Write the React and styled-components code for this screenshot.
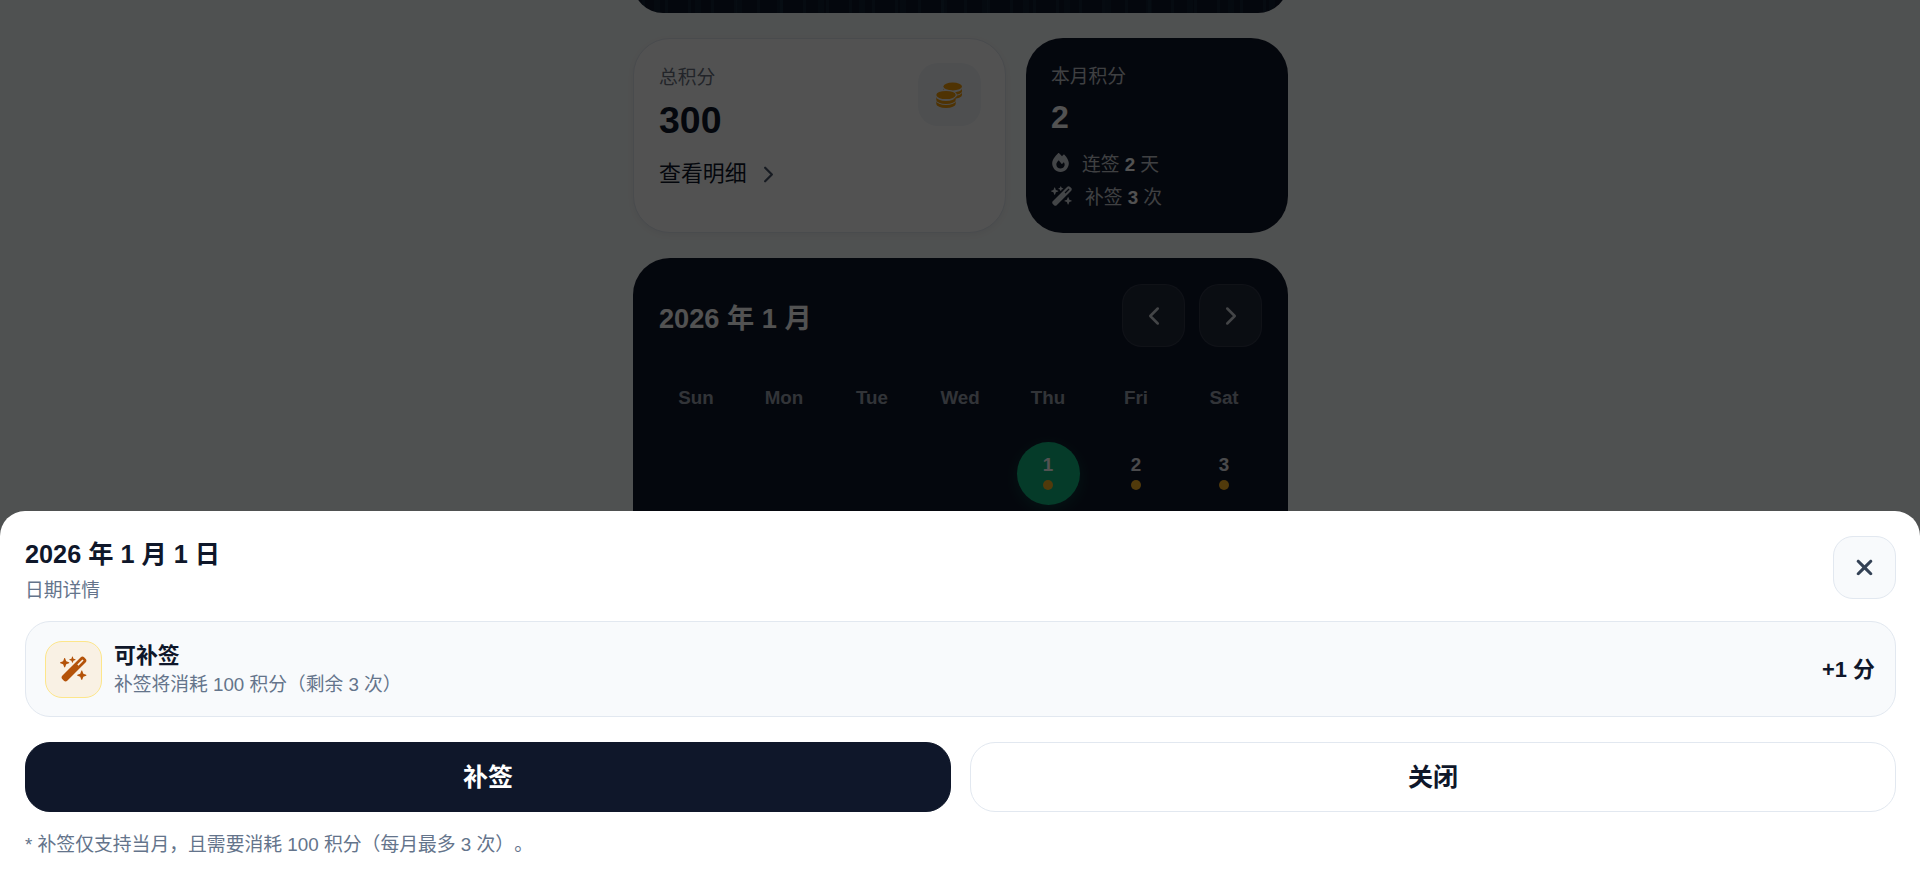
import React from "react";
import styled, { createGlobalStyle } from "styled-components";
import { FaFire, FaWandMagicSparkles, FaXmark } from "react-icons/fa6";
import { ChevronLeft, ChevronRight } from "lucide-react";

const Global = createGlobalStyle`
  html, body { margin: 0; padding: 0; height: 100%; overflow: hidden; background: #f6fafa; }
  body {
    font-family: "Liberation Sans", "Noto Sans CJK SC", sans-serif;
    color: #0f172a;
    text-spacing-trim: space-all;
  }
  button { font-family: inherit; }
  * { box-sizing: border-box; }
`;

const Page = styled.main`
  width: 655px;
  margin: -300px 0 0 633px;
  display: flex;
  flex-direction: column;
`;
const Hero = styled.div`
  height: 313px;
  border-radius: 0 0 30px 30px;
  background:
    repeating-linear-gradient(90deg, rgba(45, 110, 120, 0) 0 9px, rgba(45, 110, 120, 0.14) 9px 12px, rgba(45, 110, 120, 0) 12px 23px),
    repeating-linear-gradient(90deg, rgba(45, 110, 120, 0) 0 21px, rgba(45, 110, 120, 0.1) 21px 27px, rgba(45, 110, 120, 0) 27px 41px),
    #0f172a;
`;
const Stats = styled.section`
  margin-top: 25px;
  display: grid;
  grid-template-columns: 373px 262px;
  gap: 20px;
`;
const TotalCard = styled.div`
  position: relative;
  height: 195px;
  padding: 26px 25px 25px;
  background: #fff;
  border: 1px solid #e2e8f0;
  border-radius: 37px;
  box-shadow: 0 2px 6px rgba(15, 23, 42, 0.05);
`;
const Label = styled.div`
  font-size: 18.75px;
  line-height: 26px;
  color: ${(p) => (p.$dark ? "#c4c8ce" : "#6b7280")};
`;
const TotalValue = styled.div`
  margin-top: 6px;
  font-size: 37.5px;
  line-height: 46px;
  font-weight: 700;
`;
const DetailLink = styled.div`
  margin-top: 15px;
  display: flex;
  align-items: center;
  gap: 8px;
  font-size: 21.9px;
  line-height: 32px;
  color: #0f172a;
  svg { color: #475569; }
`;
const CoinBox = styled.div`
  position: absolute;
  top: 24px;
  right: 24px;
  width: 63px;
  height: 63px;
  display: flex;
  align-items: center;
  justify-content: center;
  border-radius: 20px;
  background: #f1f5f9;
`;
const MonthCard = styled.div`
  height: 195px;
  padding: 26px 25px 25px;
  border-radius: 37px;
  background: #0f172a;
  color: #fff;
`;
const MonthValue = styled.div`
  margin-top: 8px;
  font-size: 32px;
  line-height: 38px;
  font-weight: 700;
`;
const MonthLine = styled.div`
  display: flex;
  align-items: center;
  gap: ${(p) => p.$gap}px;
  height: 33px;
  font-size: 18.75px;
  color: #c4c8ce;
  b { color: #fff; }
  svg { flex: none; font-size: ${(p) => p.$icon}px; color: #d1d5db; }
`;
const MonthLines = styled.div`
  margin-top: 10px;
`;
const Calendar = styled.section`
  margin-top: 25px;
  height: 340px;
  padding: 26px 26px 0;
  border-radius: 37px;
  background: #0f172a;
  color: #fff;
`;
const CalHeader = styled.div`
  display: flex;
  align-items: center;
  justify-content: space-between;
`;
const CalTitle = styled.h2`
  margin: 0;
  font-size: 27.2px;
  font-weight: 700;
`;
const CalNav = styled.div`
  display: flex;
  gap: 14px;
`;
const NavButton = styled.button`
  width: 63px;
  height: 63px;
  display: flex;
  align-items: center;
  justify-content: center;
  border-radius: 20px;
  border: 1px solid rgba(255, 255, 255, 0.08);
  background: rgba(255, 255, 255, 0.08);
  color: #d1d5db;
`;
const Grid = styled.div`
  display: grid;
  grid-template-columns: repeat(7, 74px);
  column-gap: 14px;
`;
const WeekRow = styled(Grid)`
  margin-top: 38px;
`;
const WeekDay = styled.div`
  text-align: center;
  font-size: 18.75px;
  line-height: 26px;
  font-weight: 700;
  color: #9ca3af;
`;
const DayRow = styled(Grid)`
  margin-top: 31px;
`;
const DayCell = styled.div`
  justify-self: center;
  width: 63px;
  height: 63px;
  display: flex;
  flex-direction: column;
  align-items: center;
  padding-top: 12px;
  border-radius: 50%;
  font-size: 18.75px;
  line-height: 22px;
  font-weight: 700;
  color: ${(p) => (p.$active ? "#fff" : "#e5e7eb")};
  background: ${(p) => (p.$active ? "#10b981" : "transparent")};
  box-shadow: ${(p) => (p.$active ? "0 4px 14px rgba(16,185,129,.25)" : "none")};
`;
const Dot = styled.span`
  width: 10px;
  height: 10px;
  margin-top: 4px;
  border-radius: 50%;
  background: #fbb324;
`;
const Scrim = styled.div`
  position: fixed;
  inset: 0;
  background: rgba(0, 0, 0, 0.68);
`;
const Sheet = styled.aside`
  position: fixed;
  left: 0;
  right: 0;
  bottom: 0;
  height: 369px;
  padding: 25px 24px 0 25px;
  background: #fff;
  border-radius: 25px 25px 0 0;
`;
const SheetHeader = styled.div`
  display: flex;
  justify-content: space-between;
  align-items: flex-start;
  height: 85px;
`;
const SheetTitle = styled.h3`
  margin: 2px 0 0;
  font-size: 25.25px;
  line-height: 32px;
  font-weight: 700;
`;
const SheetSub = styled.div`
  margin-top: 7px;
  font-size: 18.75px;
  line-height: 28px;
  color: #64748b;
`;
const CloseButton = styled.button`
  width: 63px;
  height: 63px;
  display: flex;
  align-items: center;
  justify-content: center;
  border-radius: 20px;
  border: 1px solid #e2e8f0;
  background: #f8fafc;
  color: #334155;
  font-size: 25px;
`;
const InfoCard = styled.div`
  height: 96px;
  padding: 0 20px 0 19px;
  display: flex;
  align-items: center;
  gap: 12px;
  background: #f8fafc;
  border: 1px solid #e2e8f0;
  border-radius: 25px;
`;
const WandBox = styled.div`
  width: 57px;
  height: 57px;
  display: flex;
  align-items: center;
  justify-content: center;
  border-radius: 17px;
  background: #f9f1e4;
  border: 1px solid #fde68a;
  color: #b45309;
  font-size: 28px;
`;
const InfoText = styled.div`
  flex: 1;
  padding-top: 2px;
`;
const InfoTitle = styled.div`
  font-size: 21.9px;
  line-height: 28px;
  font-weight: 700;
`;
const InfoSub = styled.div`
  margin-top: 2px;
  font-size: 18.75px;
  line-height: 26px;
  color: #64748b;
`;
const Gain = styled.div`
  margin-bottom: 3px;
  font-size: 21.9px;
  font-weight: 700;
`;
const Actions = styled.div`
  margin-top: 25px;
  display: grid;
  grid-template-columns: 1fr 1fr;
  gap: 19px;
`;
const ActionButton = styled.button`
  height: 70px;
  padding-bottom: 5px;
  border-radius: 25px;
  font-size: 25px;
  font-weight: 700;
  color: ${(p) => (p.$primary ? "#fff" : "#0f172a")};
  background: ${(p) => (p.$primary ? "#0f172a" : "#fff")};
  border: 1px solid ${(p) => (p.$primary ? "#0f172a" : "#e2e8f0")};
`;
const Note = styled.p`
  margin: 19px 0 0;
  font-size: 18.82px;
  line-height: 28px;
  color: #64748b;
`;

const WEEK = ["Sun", "Mon", "Tue", "Wed", "Thu", "Fri", "Sat"];

const band = (cx, edge, rx, ry, h) =>
  `M${cx - rx} ${edge}A${rx} ${ry} 0 0 0 ${cx + rx} ${edge}V${edge + h}A${rx} ${ry} 0 0 1 ${cx - rx} ${edge + h}Z`;

function CoinStacks() {
  return (
    <svg width="30" height="30" viewBox="0 0 30 30" fill="#f59e0b" aria-hidden="true">
      <ellipse cx="17.7" cy="6.5" rx="9.3" ry="3.9" />
      <path d={band(17.7, 8.6, 9.3, 3.8, 2.6)} />
      <path d={band(17.7, 12.2, 9.3, 3.8, 2.8)} />
      <ellipse cx="11" cy="15" rx="11" ry="5.2" fill="#f1f5f9" />
      <ellipse cx="11" cy="15" rx="9.7" ry="4.1" />
      <path d={band(11, 17, 9.7, 4, 3)} />
      <path d={band(11, 21, 9.7, 4, 3)} />
    </svg>
  );
}

export default function App() {
  return (
    <>
      <Global />
      <Page>
        <Hero />
        <Stats>
          <TotalCard>
            <Label>总积分</Label>
            <TotalValue>300</TotalValue>
            <DetailLink>查看明细 <ChevronRight size={27} strokeWidth={2} /></DetailLink>
            <CoinBox><CoinStacks /></CoinBox>
          </TotalCard>
          <MonthCard>
            <Label $dark>本月积分</Label>
            <MonthValue>2</MonthValue>
            <MonthLines>
              <MonthLine $gap={12} $icon={19}><FaFire /><span>连签 <b>2</b> 天</span></MonthLine>
              <MonthLine $gap={12} $icon={22}><FaWandMagicSparkles /><span>补签 <b>3</b> 次</span></MonthLine>
            </MonthLines>
          </MonthCard>
        </Stats>
        <Calendar>
          <CalHeader>
            <CalTitle>2026 年 1 月</CalTitle>
            <CalNav>
              <NavButton><ChevronLeft size={30} strokeWidth={2} /></NavButton>
              <NavButton><ChevronRight size={30} strokeWidth={2} /></NavButton>
            </CalNav>
          </CalHeader>
          <WeekRow>{WEEK.map((d) => <WeekDay key={d}>{d}</WeekDay>)}</WeekRow>
          <DayRow>
            {[0, 1, 2, 3].map((i) => <span key={i} />)}
            <DayCell $active>1<Dot /></DayCell>
            <DayCell>2<Dot /></DayCell>
            <DayCell>3<Dot /></DayCell>
          </DayRow>
        </Calendar>
      </Page>
      <Scrim />
      <Sheet>
        <SheetHeader>
          <div>
            <SheetTitle>2026 年 1 月 1 日</SheetTitle>
            <SheetSub>日期详情</SheetSub>
          </div>
          <CloseButton aria-label="关闭"><FaXmark /></CloseButton>
        </SheetHeader>
        <InfoCard>
          <WandBox><FaWandMagicSparkles /></WandBox>
          <InfoText>
            <InfoTitle>可补签</InfoTitle>
            <InfoSub>补签将消耗 100 积分（剩余 3 次）</InfoSub>
          </InfoText>
          <Gain>+1 分</Gain>
        </InfoCard>
        <Actions>
          <ActionButton $primary>补签</ActionButton>
          <ActionButton>关闭</ActionButton>
        </Actions>
        <Note>* 补签仅支持当月，且需要消耗 100 积分（每月最多 3 次）。</Note>
      </Sheet>
    </>
  );
}
